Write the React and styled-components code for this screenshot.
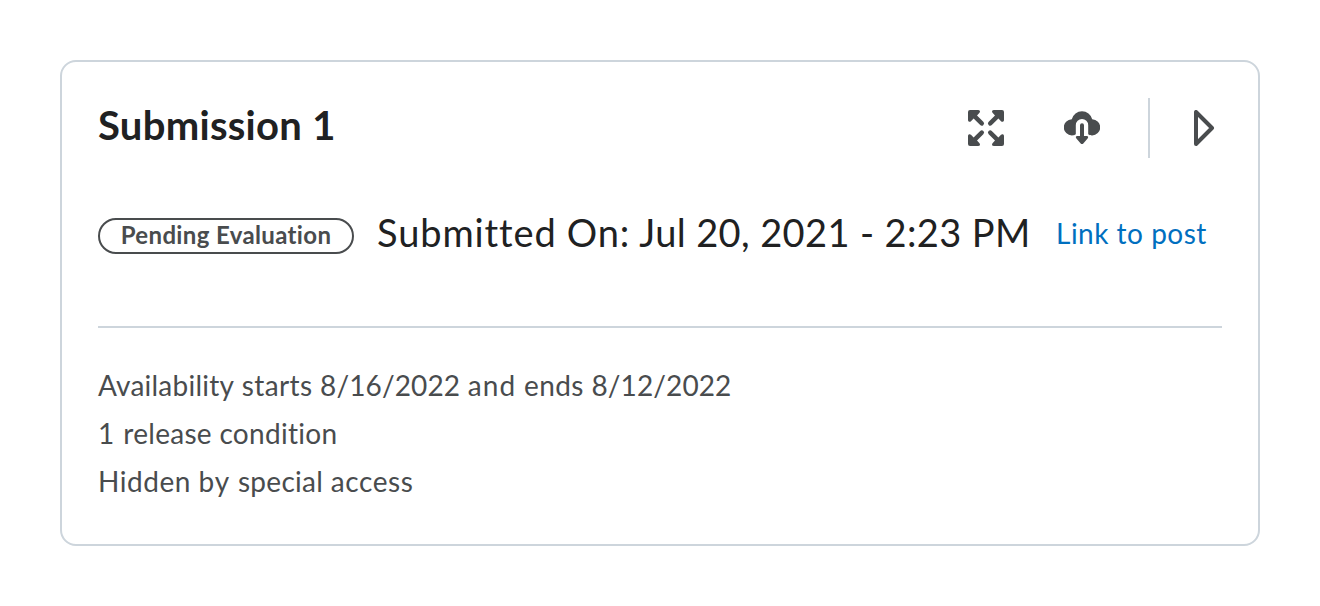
import React from "react";
import styled, { createGlobalStyle } from "styled-components";

const GlobalStyle = createGlobalStyle`
  * { box-sizing: border-box; }
  body {
    margin: 0;
    background: #fff;
    color: #202122;
    font-family: Lato, "Liberation Sans", sans-serif;
  }
`;

const Page = styled.main`
  height: 606px;
  padding: 60px;
`;

const Card = styled.section`
  height: 486px;
  padding: 36px;
  border: 2px solid #cdd5dc;
  border-radius: 16px;
`;

const Header = styled.header`
  display: flex;
  align-items: center;
  justify-content: space-between;
  height: 60px;
`;

const Title = styled.h2`
  margin: 0;
  padding-bottom: 6px;
  font-size: 40px;
  line-height: 54px;
  font-weight: 700;
  letter-spacing: 0.28px;
`;

const Actions = styled.div`
  display: flex;
  align-items: center;
`;

const IconButton = styled.button`
  display: flex;
  align-items: center;
  justify-content: ${(p) => (p.$end ? "flex-end" : "center")};
  width: ${(p) => p.$width || 84}px;
  height: 60px;
  margin: 0 ${(p) => p.$gap || 0}px 0 0;
  padding: 0;
  border: 0;
  background: none;
  color: #494c4e;
`;

const Icon = styled.svg`
  display: block;
  width: 36px;
  height: 36px;
`;

const Separator = styled.div`
  width: 2px;
  height: 60px;
  margin-left: 6px;
  background: #cdd5dc;
`;

const Details = styled.div`
  display: flex;
  align-items: center;
  height: 60px;
  margin-top: 48px;
  white-space: nowrap;
`;

const Badge = styled.span`
  flex: none;
  width: 256px;
  height: 36px;
  border: 2px solid #494c4e;
  border-radius: 18px;
  color: #494c4e;
  font-size: 24px;
  font-weight: 700;
  line-height: 29px;
  letter-spacing: 0.36px;
  text-align: center;
`;

const Submitted = styled.span`
  flex: none;
  width: 655px;
  margin: 0 0 8px 23px;
  font-size: 38px;
  line-height: 52px;
  letter-spacing: 0.38px;
`;

const PostLink = styled.a`
  margin: 0 0 6px 24px;
  color: #006fbf;
  font-size: 28px;
  line-height: 40px;
  letter-spacing: 0.5px;
  text-decoration: none;
`;

const Availability = styled.div`
  margin-top: 60px;
  padding-top: 33px;
  border-top: 2px solid #cdd5dc;
  color: #494c4e;
  font-size: 28px;
  line-height: 48px;
  letter-spacing: 0.4px;
`;

const Line = styled.p`
  margin: 0;
`;

const Word = styled.span`
  letter-spacing: ${(p) => p.$track}px;
`;

function ExpandIcon() {
  const corner =
    "M2 0H10C12 0 12.5 1.5 11.5 2.8L9 5.4L15.3 11.7A2.2 2.2 0 0 1 12.2 15L5.6 8.6L3 11.2C1.8 12.4 0 11.8 0 10V2A2 2 0 0 1 2 0Z";
  return (
    <Icon viewBox="0 0 36 36" fill="currentColor" aria-hidden="true">
      <path d={corner} />
      <path d={corner} transform="matrix(-1 0 0 1 36 0)" />
      <path d={corner} transform="matrix(1 0 0 -1 0 36)" />
      <path d={corner} transform="matrix(-1 0 0 -1 36 36)" />
    </Icon>
  );
}

function DownloadIcon() {
  return (
    <Icon viewBox="0 0 36 36" fill="currentColor" aria-hidden="true">
      <path d="M8 25.4A8 8 0 0 1 7.8 9.2A10.5 10.5 0 0 1 28.2 9.2A8.1 8.1 0 0 1 28 25.4C26.5 25.4 25.4 25 24.2 24.2V15.2A6.2 6.2 0 0 0 11.8 15.2V24.2C10.6 25 9.5 25.4 8 25.4Z" />
      <path d="M16 15.3A2 2 0 0 1 20 15.3V26H22.8C24.2 26 24.6 27.4 23.6 28.5L19.3 33.4C18.6 34.3 17.4 34.3 16.7 33.4L12.4 28.5C11.4 27.4 11.8 26 13.2 26H16Z" />
    </Icon>
  );
}

function NextIcon() {
  return (
    <Icon viewBox="0 0 36 36" aria-hidden="true">
      <path
        d="M10 2V34L26 18Z"
        fill="none"
        stroke="currentColor"
        strokeWidth="4"
        strokeLinejoin="round"
      />
    </Icon>
  );
}

export default function App() {
  return (
    <>
      <GlobalStyle />
      <Page>
        <Card>
          <Header>
            <Title>Submission 1</Title>
            <Actions>
              <IconButton $gap={12} aria-label="Full screen">
                <ExpandIcon />
              </IconButton>
              <IconButton $gap={18} aria-label="Download">
                <DownloadIcon />
              </IconButton>
              <Separator />
              <IconButton $width={72} $end aria-label="Next">
                <NextIcon />
              </IconButton>
            </Actions>
          </Header>
          <Details>
            <Badge>Pending Evaluation</Badge>
            <Submitted>
              <Word $track={0.9}>Submitted</Word> <Word $track={0.9}>On:</Word>{" "}
              Jul 20, 2021 - 2:23 PM
            </Submitted>
            <PostLink>Link to post</PostLink>
          </Details>
          <Availability>
            <Line>
              <Word $track={0.23}>Availability</Word> starts{" "}
              <Word $track={0.11}>8/16/2022</Word> <Word $track={1.2}>and</Word>{" "}
              ends <Word $track={0.11}>8/12/2022</Word>
            </Line>
            <Line>
              <Word $track={0.9}>1 </Word>
              <Word $track={0.3}>release condition</Word>
            </Line>
            <Line>
              <Word $track={0.55}>Hidden</Word> <Word $track={1}>by</Word>{" "}
              <Word $track={0.3}>special</Word> <Word $track={0.6}>access</Word>
            </Line>
          </Availability>
        </Card>
      </Page>
    </>
  );
}
